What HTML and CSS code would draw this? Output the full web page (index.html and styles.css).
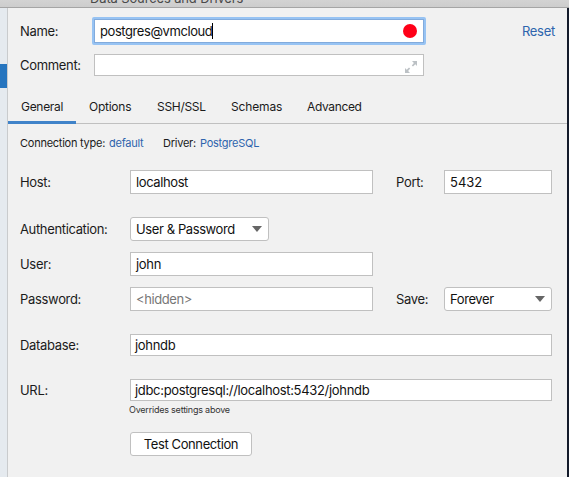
FILE: index.html
```html
<!DOCTYPE html>
<html lang="en">
<head>
<meta charset="utf-8">
<title>Data Sources and Drivers</title>
<link rel="stylesheet" href="styles.css">
</head>
<body>
<div class="window">
  <header class="titlebar"><span>Data Sources and Drivers</span></header>
  <div class="content">
    <aside class="sidebar"><div class="selected"></div></aside>
    <main class="panel">
      <div class="row name-row">
        <label class="label">Name:</label>
        <div class="focus-ring"><div class="field name-field"><span class="t-value">postgres@vmcloud</span><i class="caret"></i><i class="color-dot"></i></div></div>
        <a class="reset">Reset</a>
      </div>
      <div class="row comment-row">
        <label class="label">Comment:</label>
        <div class="field comment-field">
          <svg class="expand" width="12" height="12" viewBox="0 0 12 12"><path d="M7 0h5v5l-1.7-1.7-2.3 2.3-1.2-1.2 2.1-2.4zM0 12V7l1.7 1.7 2.3-2.3 1.2 1.2-2.1 2.4L5 12z" fill="#bcc1c5"/></svg>
        </div>
      </div>
      <nav class="tabs">
        <span class="tab tab-general">General</span>
        <span class="tab tab-options">Options</span>
        <span class="tab tab-ssh">SSH/SSL</span>
        <span class="tab tab-schemas">Schemas</span>
        <span class="tab tab-advanced">Advanced</span>
      </nav>
      <div class="meta">
        <span class="meta-type">Connection type:</span><a class="meta-default">default</a>
        <span class="meta-driver">Driver:</span><a class="meta-pg">PostgreSQL</a>
      </div>
      <div class="row host-row">
        <label class="label">Host:</label>
        <div class="field medium"><span class="t-host">localhost</span></div>
        <label class="side-label">Port:</label>
        <div class="field small"><span class="t-port">5432</span></div>
      </div>
      <div class="row auth-row">
        <label class="label t-auth">Authentication:</label>
        <div class="field select auth-select"><span class="t-userpw">User &amp; Password</span><i class="arrow"></i></div>
      </div>
      <div class="row user-row">
        <label class="label">User:</label>
        <div class="field medium"><span>john</span></div>
      </div>
      <div class="row password-row">
        <label class="label">Password:</label>
        <div class="field medium"><span class="placeholder">&lt;hidden&gt;</span></div>
        <label class="side-label">Save:</label>
        <div class="field select small"><span class="t-forever">Forever</span><i class="arrow"></i></div>
      </div>
      <div class="row database-row">
        <label class="label">Database:</label>
        <div class="field wide"><span>johndb</span></div>
      </div>
      <div class="row url-row">
        <label class="label">URL:</label>
        <div class="field wide"><span class="t-url">jdbc:postgresql://localhost:5432/johndb</span></div>
      </div>
      <div class="hint">Overrides settings above</div>
      <button class="test">Test Connection</button>
    </main>
    <div class="desktop-edge"></div>
  </div>
</div>
</body>
</html>
```
FILE: styles.css
```css
* { box-sizing: border-box; }
body { margin: 0; overflow: hidden; font-family: Inter, "Liberation Sans", sans-serif; font-size: 13px; letter-spacing: -0.32px; color: #1b1b1b; }
.window { width: 569px; height: 477px; display: flex; flex-direction: column; background: #f1f1f1; }
.titlebar { height: 8px; flex: none; overflow: hidden; background: linear-gradient(#d3d3d3, #cdcdcd); border-bottom: 1px solid #a5a5a5; color: #4a4a4a; padding-left: 90px; display: flex; align-items: flex-end; }
.titlebar span { line-height: 16px; margin-bottom: 1px; letter-spacing: -0.14px; white-space: nowrap; }
.content { flex: 1; display: flex; min-height: 0; }
.sidebar { width: 8px; padding-top: 56px; background: #e5eaef; border-right: 1px solid #c9cbcd; }
.selected { height: 24px; background: #2675bf; }
.panel { width: 559px; }
.desktop-edge { width: 2px; background: #141b2b; }
.row { display: flex; align-items: center; padding-left: 12px; white-space: nowrap; height: 24px; }
.label { width: 110px; flex: none; }
.t-auth { letter-spacing: -0.35px; }
.field { height: 24px; flex: none; background: #fff; border: 1px solid #c0c0c0; display: flex; align-items: center; padding-left: 5px; color: #111; }
.medium { width: 243px; }
.small { width: 108px; }
.wide { width: 422px; height: 22px; padding-left: 4px; }
.side-label { width: 71px; flex: none; padding-left: 23px; }
.name-row { height: 28px; margin-top: 9px; }
.name-row .label { width: 72px; }
.focus-ring { border: 2px solid #97c3f3; border-radius: 2px; flex: none; }
.name-field { width: 330px; border-color: #82abdc; }
.t-value { letter-spacing: -0.42px; }
.t-host, .t-userpw { letter-spacing: -0.4px; }
.t-port { letter-spacing: 0; }
.t-forever { letter-spacing: -0.4px; }
.t-url { letter-spacing: -0.32px; }
.caret { width: 1px; height: 16px; background: #000; }
.color-dot { width: 14px; height: 14px; border-radius: 50%; background: #ff0018; margin-left: auto; margin-right: 6px; }
.reset { color: #2e64ad; margin-left: 96px; }
.comment-row { height: 22px; margin-top: 9px; }
.comment-row .label { width: 74px; }
.comment-field { width: 330px; height: 22px; }
.expand { margin-left: auto; margin-right: 6px; margin-top: 3px; }
.tabs { display: flex; height: 48px; font-size: 12px; letter-spacing: -0.15px; background: linear-gradient(#c0c0c0, #c0c0c0) 0 47px / 100% 1px no-repeat; }
.tab { padding-top: 22px; line-height: 18px; white-space: nowrap; flex: none; }
.tab-general { width: 68px; padding-left: 13px; border-bottom: 3px solid #4083c9; margin-right: 13px; letter-spacing: -0.3px; }
.tab-options { width: 68px; letter-spacing: -0.25px; }
.tab-ssh { width: 74px; letter-spacing: -0.3px; }
.tab-schemas { width: 76px; }
.tab-advanced { letter-spacing: -0.35px; }
.meta { height: 46px; padding-left: 12px; display: flex; font-size: 11px; letter-spacing: -0.25px; line-height: 16px; padding-top: 11px; white-space: nowrap; }
.meta a { color: #2e64ad; }
.meta-type { width: 89px; }
.meta-default { width: 54px; }
.meta-driver { width: 37px; }
.auth-row { margin-top: 23px; }
.select { border-radius: 3px; }
.auth-select { width: 139px; }
.arrow { width: 10px; height: 6px; background: #666; clip-path: polygon(0 0, 100% 0, 50% 100%); margin-left: auto; margin-right: 6px; }
.user-row, .password-row { margin-top: 11px; }
.placeholder { color: #777; letter-spacing: -0.4px; }
.database-row { height: 22px; margin-top: 23px; }
.url-row { height: 22px; margin-top: 23px; }
.hint { height: 31px; padding: 3px 0 0 121px; font-size: 9px; line-height: 12px; letter-spacing: -0.22px; color: #333; }
.test { display: block; margin-left: 122px; width: 122px; height: 24px; padding: 0; background: #fff; border: 1px solid #c0c0c0; border-radius: 3px; font: inherit; letter-spacing: -0.4px; color: #111; }
```
